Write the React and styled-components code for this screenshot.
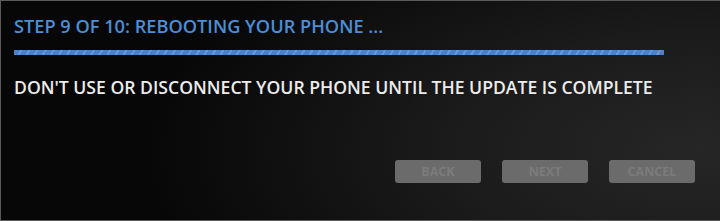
import React from 'react';
import styled, { createGlobalStyle } from 'styled-components';

const GlobalStyle = createGlobalStyle`
  html, body {
    margin: 0;
    padding: 0;
    background: #000;
  }
  body {
    font-family: "Open Sans", "Noto Sans", sans-serif;
  }
`;

const Panel = styled.div`
  box-sizing: border-box;
  width: 721px;
  height: 221px;
  border: 1px solid #5a5a5a;
  border-right: none;
  background: radial-gradient(ellipse 560px 260px at 700px 150px, #262626 0%, #1b1b1b 45%, #070707 100%);
  padding: 13px 13px 0 13px;
  display: flex;
  flex-direction: column;
`;

const Title = styled.h1`
  margin: 0;
  font-size: 18.2px;
  font-weight: 600;
  line-height: 24px;
  color: #4b8ed8;
`;

const Progress = styled.div`
  margin-top: 12px;
  width: 650px;
  height: 5px;
  background: repeating-linear-gradient(
    -60deg,
    #4f7fc4 0px,
    #4f7fc4 5px,
    #6a95d4 5px,
    #6a95d4 7px
  );
`;

const Message = styled.p`
  margin: 20px 0 0 0;
  font-size: 17.6px;
  font-weight: 600;
  line-height: 24px;
  color: #ececec;
`;

const Actions = styled.div`
  margin-top: auto;
  margin-bottom: 37px;
  display: flex;
  justify-content: flex-end;
  gap: 21px;
  padding-right: 13px;
`;

const Button = styled.button`
  width: 86px;
  height: 23px;
  border: none;
  border-radius: 3px;
  background: #6b6b6b;
  color: #7b7b7b;
  font-family: "Open Sans", "Noto Sans", sans-serif;
  font-size: 12.5px;
  font-weight: 700;
  padding: 0;
  cursor: default;
`;

export default function App() {
  return (
    <>
      <GlobalStyle />
      <Panel>
        <Title>STEP 9 OF 10: REBOOTING YOUR PHONE ...</Title>
        <Progress />
        <Message>DON'T USE OR DISCONNECT YOUR PHONE UNTIL THE UPDATE IS COMPLETE</Message>
        <Actions>
          <Button disabled>BACK</Button>
          <Button disabled>NEXT</Button>
          <Button disabled>CANCEL</Button>
        </Actions>
      </Panel>
    </>
  );
}
